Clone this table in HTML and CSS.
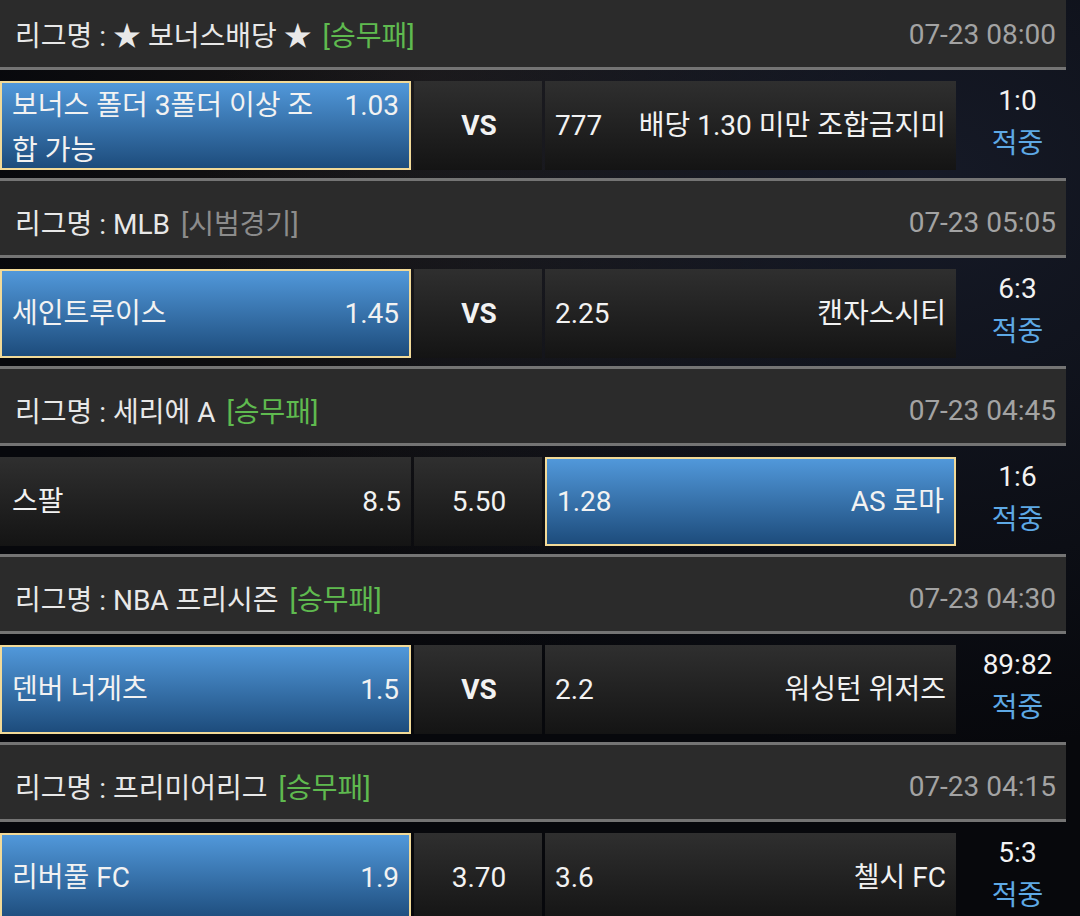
FILE: index.html
```html
<!DOCTYPE html>
<html lang="ko">
<head>
  <meta charset="UTF-8" />
  <meta name="viewport" content="width=device-width, initial-scale=1.0" />
  <title>경기결과</title>
  <link rel="stylesheet" href="styles.css">
</head>
<body>

  <div class="game-list">

    <section class="game">
      <div class="league">
        <span class="league-name">리그명 : ★ 보너스배당 ★ <span class="type green">[승무패]</span></span>
        <span class="time">07-23 08:00</span>
      </div>
      <div class="bet-row">
        <div class="pick home selected"><div class="pick-in"><span class="team">보너스 폴더 3폴더 이상 조합 가능</span><span class="odds">1.03</span></div></div>
        <div class="pick draw vs">VS</div>
        <div class="pick away"><div class="pick-in"><span class="odds">777</span><span class="team">배당 1.30 미만 조합금지미</span></div></div>
        <div class="result"><span class="score">1:0</span><span class="hit">적중</span></div>
      </div>
    </section>

    <section class="game">
      <div class="league">
        <span class="league-name">리그명 : MLB <span class="type gray">[시범경기]</span></span>
        <span class="time">07-23 05:05</span>
      </div>
      <div class="bet-row">
        <div class="pick home selected"><div class="pick-in"><span class="team">세인트루이스</span><span class="odds">1.45</span></div></div>
        <div class="pick draw vs">VS</div>
        <div class="pick away"><div class="pick-in"><span class="odds">2.25</span><span class="team">캔자스시티</span></div></div>
        <div class="result"><span class="score">6:3</span><span class="hit">적중</span></div>
      </div>
    </section>

    <section class="game">
      <div class="league">
        <span class="league-name">리그명 : 세리에 A <span class="type green">[승무패]</span></span>
        <span class="time">07-23 04:45</span>
      </div>
      <div class="bet-row">
        <div class="pick home"><div class="pick-in"><span class="team">스팔</span><span class="odds">8.5</span></div></div>
        <div class="pick draw">5.50</div>
        <div class="pick away selected"><div class="pick-in"><span class="odds">1.28</span><span class="team">AS 로마</span></div></div>
        <div class="result"><span class="score">1:6</span><span class="hit">적중</span></div>
      </div>
    </section>

    <section class="game">
      <div class="league">
        <span class="league-name">리그명 : NBA 프리시즌 <span class="type green">[승무패]</span></span>
        <span class="time">07-23 04:30</span>
      </div>
      <div class="bet-row">
        <div class="pick home selected"><div class="pick-in"><span class="team">덴버 너게츠</span><span class="odds">1.5</span></div></div>
        <div class="pick draw vs">VS</div>
        <div class="pick away"><div class="pick-in"><span class="odds">2.2</span><span class="team">워싱턴 위저즈</span></div></div>
        <div class="result"><span class="score">89:82</span><span class="hit">적중</span></div>
      </div>
    </section>

    <section class="game">
      <div class="league">
        <span class="league-name">리그명 : 프리미어리그 <span class="type green">[승무패]</span></span>
        <span class="time">07-23 04:15</span>
      </div>
      <div class="bet-row">
        <div class="pick home selected"><div class="pick-in"><span class="team">리버풀 FC</span><span class="odds">1.9</span></div></div>
        <div class="pick draw">3.70</div>
        <div class="pick away"><div class="pick-in"><span class="odds">3.6</span><span class="team">첼시 FC</span></div></div>
        <div class="result"><span class="score">5:3</span><span class="hit">적중</span></div>
      </div>
    </section>

  </div>

</body>
</html>
```

FILE: styles.css
```css
html, body {
  margin: 0;
  height: 100%;
  overflow: hidden;
}
body {
  background:
    radial-gradient(ellipse at 85% 20%, rgba(40, 48, 72, 0.45), transparent 55%),
    radial-gradient(ellipse at 40% 10%, rgba(60, 50, 40, 0.35), transparent 50%),
    #07080c;
  color: #f2f2f2;
  font-family: 'Roboto', 'Noto Sans CJK KR', sans-serif;
  font-size: 28px;
}
.game-list {
  width: 1066px;
  margin-top: -10px;
}
.league {
  display: flex;
  justify-content: space-between;
  align-items: center;
  height: 66px;
  padding: 8px 10px 0 15px;
  background: #2b2b2b;
  border-top: 3px solid #747474;
  border-bottom: 3px solid #747474;
  color: #e8e8e8;
}
.type {
  margin-left: 4px;
}
.type.green {
  color: #5fba4f;
}
.type.gray {
  color: #8c8c8c;
}
.time {
  color: #a3a3a3;
}
.bet-row {
  display: grid;
  grid-template-columns: 411px 128px 411px 1fr;
  grid-template-rows: 89px;
  column-gap: 3px;
  height: 108px;
  padding: 11px 0 8px;
  box-sizing: border-box;
}
.pick {
  display: flex;
  align-items: safe center;
  box-sizing: border-box;
  height: 89px;
  padding: 0 10px 0 12px;
  background: linear-gradient(#2f2f2f, #141414);
  line-height: 45px;
}
.pick.away {
  padding: 0 10px;
}
.pick.selected {
  background: linear-gradient(#5198da, #1d4c7c);
  border: 2px solid #f2da98;
  padding: 0 10px;
}
.pick.draw {
  justify-content: center;
}
.pick-in {
  display: flex;
  align-items: flex-start;
  justify-content: space-between;
  width: 100%;
}
.vs {
  font-weight: bold;
}
.home .team {
  flex: 1;
  min-width: 0;
  padding-right: 30px;
  word-break: break-all;
}
.away .team {
  text-align: right;
}
.result {
  display: flex;
  flex-direction: column;
  justify-content: center;
  align-items: center;
  padding: 0 0 8px 10px;
  line-height: 43px;
}
.hit {
  color: #5ea9e5;
}
```
